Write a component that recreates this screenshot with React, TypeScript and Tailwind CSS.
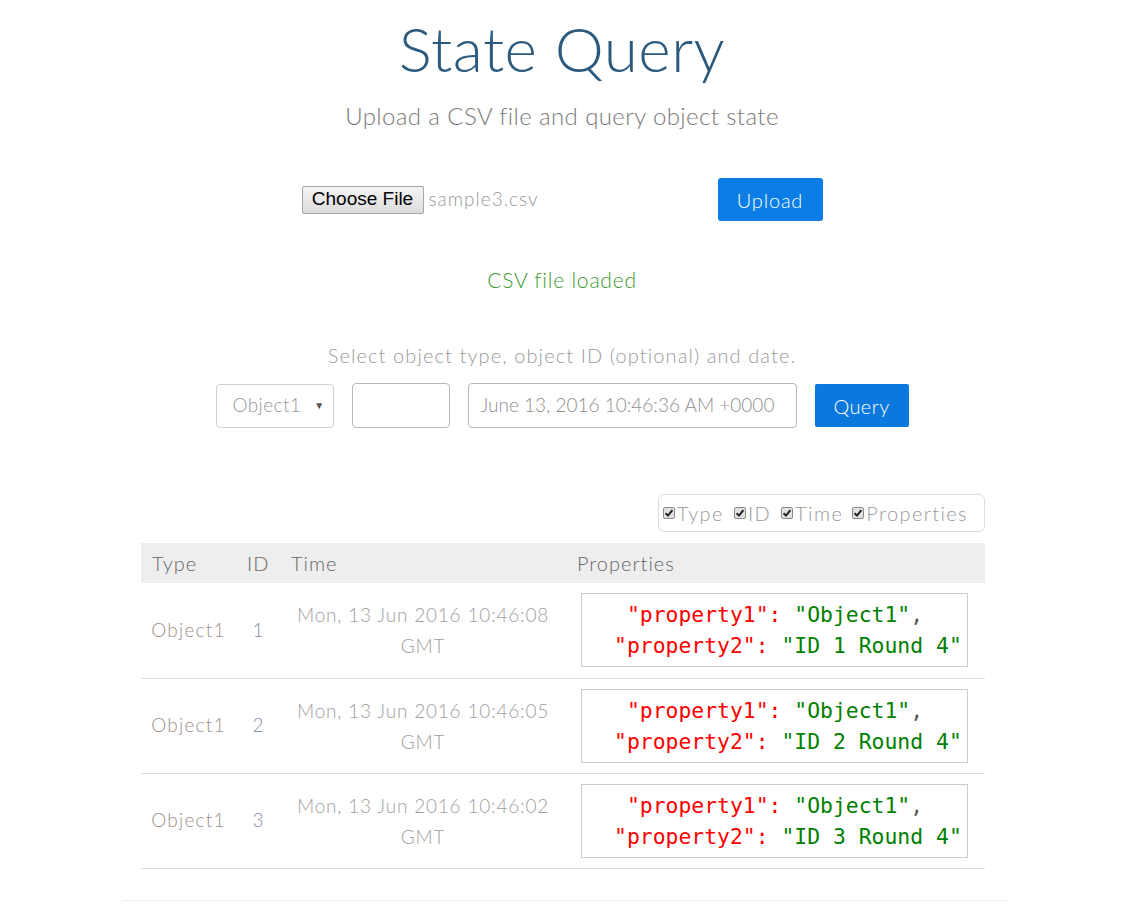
import React from "react";

const rows = [
  { id: "1", time: "Mon, 13 Jun 2016 10:46:08", round: "ID 1 Round 4" },
  { id: "2", time: "Mon, 13 Jun 2016 10:46:05", round: "ID 2 Round 4" },
  { id: "3", time: "Mon, 13 Jun 2016 10:46:02", round: "ID 3 Round 4" },
];

function Check() {
  return (
    <svg width="12" height="12" viewBox="0 0 12 12" className="mr-[2px] shrink-0">
      <rect x="0.5" y="0.5" width="11" height="11" rx="1.5" fill="#e2e2e2" stroke="#8a8a8a" />
      <path d="M2.6 6.2 L5 8.6 L9.4 3.2" fill="none" stroke="#222" strokeWidth="2" />
    </svg>
  );
}

export default function App() {
  return (
    <div
      className="w-[1122px] min-h-[924px] bg-white flex flex-col items-center font-light pl-[2px]"
      style={{ fontFamily: "Lato, 'Open Sans', sans-serif" }}
    >
      <h1 className="mt-[16px] text-[62px] leading-[64px] text-[#2b5a7e] tracking-[0.5px]">State Query</h1>
      <p className="mt-[20px] text-[24px] leading-[32px] text-[#7a7a7a] tracking-[0.4px]">
        Upload a CSV file and query object state
      </p>

      <div className="mt-[46px] flex items-center h-[43px]">
        <div className="w-[416px] flex items-center">
          <span
            className="h-[28px] w-[122px] flex items-center justify-center rounded-[2px] border border-[#a6a6a6] bg-gradient-to-b from-[#f4f4f4] to-[#dcdcdc] text-[19px] text-black font-normal"
            style={{ fontFamily: "'Liberation Sans', Arial, sans-serif" }}
          >
            Choose File
          </span>
          <span className="ml-[5px] text-[19px] text-[#999] tracking-[1px]">sample3.csv</span>
        </div>
        <button className="h-[43px] w-[105px] rounded-[3px] bg-[#0a7ee6] text-white text-[20px] font-light tracking-[0.8px]">
          Upload
        </button>
      </div>

      <p className="mt-[45px] text-[21px] leading-[28px] text-[#3c9a2e] tracking-[0.8px]">CSV file loaded</p>

      <p className="mt-[48px] text-[20px] leading-[26px] text-[#9a9a9a] tracking-[1.1px]">
        Select object type, object ID (optional) and date.
      </p>

      <div className="mt-[15px] flex items-center gap-[18px]">
        <div className="h-[44px] w-[118px] border border-[#cfcfcf] rounded-[4px] flex items-center justify-between pl-[16px] pr-[8px] text-[19px] text-[#999] tracking-[0.4px]">
          <span>Object1</span>
          <span className="text-[10px] text-[#555]">▼</span>
        </div>
        <div className="h-[45px] w-[98px] border border-[#b8b8b8] rounded-[4px]" />
        <div className="h-[45px] w-[329px] border border-[#b8b8b8] rounded-[4px] flex items-center pl-[12px] text-[19px] text-[#8f8f8f]">
          June 13, 2016 10:46:36 AM +0000
        </div>
        <button className="h-[43px] w-[94px] rounded-[2px] bg-[#0b78dd] text-white text-[20px] font-light tracking-[0.4px]">
          Query
        </button>
      </div>

      <div className="w-[844px] ml-[2px] mt-[66px] flex justify-end">
        <div className="h-[38px] w-[327px] border border-[#dcdcdc] rounded-[6px] flex items-center pl-[4px] text-[20px] text-[#9a9a9a] tracking-[1.4px]">
          <Check />
          <span className="mr-[10px]">Type</span>
          <Check />
          <span className="mr-[10px]">ID</span>
          <Check />
          <span className="mr-[9px]">Time</span>
          <Check />
          <span>Properties</span>
        </div>
      </div>

      <table className="mt-[11px] ml-[2px] w-[844px] table-fixed border-collapse">
        <colgroup>
          <col className="w-[95px]" />
          <col className="w-[44px]" />
          <col className="w-[286px]" />
          <col className="w-[419px]" />
        </colgroup>
        <thead>
          <tr className="bg-[#eeeeee] h-[40px]">
            <th className="text-left font-light pl-[11px] text-[20px] text-[#666] tracking-[1px]">Type</th>
            <th className="text-left font-light pl-[11px] text-[20px] text-[#666] tracking-[1px]">ID</th>
            <th className="text-left font-light pl-[11px] text-[20px] text-[#666] tracking-[1px]">Time</th>
            <th className="text-left font-light pl-[11px] text-[20px] text-[#666] tracking-[1px]">Properties</th>
          </tr>
        </thead>
        <tbody>
          {rows.map((r) => (
            <tr key={r.id} className="h-[95px] border-b border-[#dddddd]">
              <td className="text-center align-middle text-[19px] text-[#a09088] tracking-[1.2px]">Object1</td>
              <td className="text-center align-middle text-[19px] text-[#8890a0]">{r.id}</td>
              <td className="text-center align-middle text-[19px] leading-[31px] text-[#a0a0a0] tracking-[0.8px]">
                {r.time}
                <br />
                GMT
              </td>
              <td className="align-middle pl-[15px]">
                <div
                  className="w-[387px] h-[74px] border border-[#cccccc] flex flex-col justify-center pl-[32px] text-[21.4px] leading-[31px] whitespace-pre font-normal"
                  style={{ fontFamily: "'DejaVu Sans Mono', monospace" }}
                >
                  <div>
                    {" "}
                    <span className="text-[#ff0000]">"property1"</span>
                    <span className="text-[#ff0000]">: </span>
                    <span className="text-[#008000]">"Object1"</span>
                    <span className="text-[#555]">,</span>
                  </div>
                  <div>
                    <span className="text-[#ff0000]">"property2"</span>
                    <span className="text-[#ff0000]">: </span>
                    <span className="text-[#008000]">"{r.round}"</span>
                  </div>
                </div>
              </td>
            </tr>
          ))}
        </tbody>
      </table>

      <div className="mt-[31px] ml-[4px] w-[885px] border-t border-[#eeeeee]" />
    </div>
  );
}
